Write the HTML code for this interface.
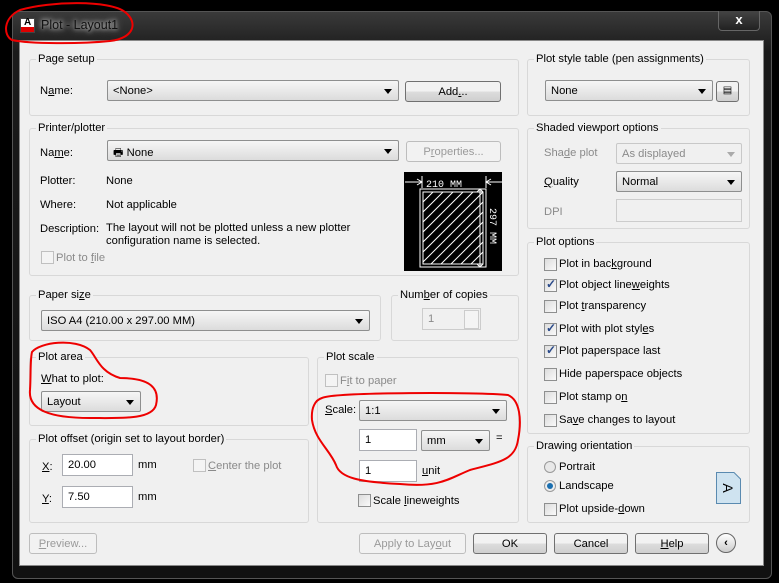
<!DOCTYPE html>
<html><head><meta charset="utf-8"><style>
*{box-sizing:border-box}
body{margin:0;width:779px;height:583px;background:#000;position:relative;overflow:hidden;font-family:"Liberation Sans",sans-serif;font-size:11.2px;color:#000}
.a{position:absolute;white-space:nowrap}
.frame{position:absolute;left:12px;top:11px;width:760px;height:568px;background:linear-gradient(#3a3a3a,#1a1a1a 40px,#111);border:1px solid #555;border-radius:6px}
.client{position:absolute;left:19px;top:40px;width:745px;height:526px;background:#f0f0f0;border:1px solid #888}
.g{position:absolute;border:1px solid #d8d8d8;border-radius:3px}
.gl{position:absolute;background:#f0f0f0;padding:0 2px;left:6px;top:-7px;white-space:nowrap}
.cb{position:absolute;border:1px solid #8e8f8f;border-radius:2px;background:linear-gradient(#f6f6f6,#dcdcdc);height:21px;padding:4px 5px 0;white-space:nowrap}
.cb:after{content:"";position:absolute;right:6px;top:8px;border:4px solid transparent;border-top:5px solid #000;border-bottom:0}
.cb.dis{color:#8a8a8a;border-color:#c8c8c8;background:#f0f0f0}
.cb.dis:after{border-top-color:#aaa}
.btn{position:absolute;border:1px solid #707070;border-radius:3px;background:linear-gradient(#f2f2f2 50%,#dddddd 50%,#cfcfcf);text-align:center;height:21px;padding-top:4px}
.btn.dis{color:#9a9a9a;border-color:#bdbdbd;background:#f2f2f2}
.in{position:absolute;background:#fff;border:1px solid #abadb3;height:22px;padding:4px 5px}
.ck{position:absolute;width:13px;height:13px;border:1px solid #8e8f8f;background:linear-gradient(135deg,#dcdcdc,#fafafa)}
.ck.on:after{content:"✓";position:absolute;left:1px;top:-3px;font-size:12px;color:#2a4a8a;font-weight:bold}
.ck.dis{border-color:#c0c0c0;background:#f4f4f4}
.gr{color:#8a8a8a}
u{text-decoration:underline}
</style></head><body>
<div class="frame"></div>
<div class="a" style="left:20px;top:18px;width:15px;height:15px;background:#fff;border:1px solid #444"><div style="position:absolute;left:0;right:0;bottom:0;height:5px;background:#d00"></div><div style="position:absolute;left:3px;top:-2px;font-size:10px;font-weight:bold">A</div></div>
<div class="a" style="left:41px;top:18px;font-size:12.5px;color:#111;text-shadow:0 0 4px #ddd,0 0 8px #bbb">Plot - Layout1</div>
<div class="a" style="left:718px;top:11px;width:42px;height:20px;border:1px solid #666;border-top:0;border-radius:0 0 4px 4px;background:linear-gradient(#444,#222);color:#fff;font-weight:bold;text-align:center;font-size:13px;line-height:18px">x</div>
<div class="client"></div>

<div class="g" style="left:29px;top:59px;width:490px;height:57px"><span class="gl">Page setup</span></div>
<div class="a" style="left:40px;top:85px">N<u>a</u>me:</div>
<div class="cb" style="left:107px;top:80px;width:292px">&lt;None&gt;</div>
<div class="btn" style="left:405px;top:81px;width:96px">Add<u>.</u>..</div>

<div class="g" style="left:29px;top:128px;width:490px;height:148px"><span class="gl">Printer/plotter</span></div>
<div class="a" style="left:40px;top:147px">Na<u>m</u>e:</div>
<div class="cb" style="left:107px;top:140px;width:292px">🖶 None</div>
<div class="btn dis" style="left:406px;top:141px;width:95px">P<u>r</u>operties...</div>
<div class="a" style="left:40px;top:175px">Plotter:</div><div class="a" style="left:106px;top:175px">None</div>
<div class="a" style="left:40px;top:199px">Where:</div><div class="a" style="left:106px;top:199px">Not applicable</div>
<div class="a" style="left:40px;top:223px">Description:</div>
<div class="a" style="left:106px;top:222px;line-height:13px">The layout will not be plotted unless a new plotter<br>configuration name is selected.</div>
<div class="ck dis" style="left:41px;top:251px"></div><div class="a gr" style="left:56px;top:252px">Plot to <u>f</u>ile</div>
<svg class="a" style="left:404px;top:172px" width="98" height="99" viewBox="0 0 98 99">
<rect width="98" height="99" fill="#000"/>
<g stroke="#fff" fill="none" stroke-width="1">
<path d="M1 10H18M13 7L18 10L13 13M82 10H98M87 7L82 10L87 13M18 4V16M82 4V16"/>
<rect x="16" y="17" width="66" height="78"/><rect x="19" y="20" width="60" height="72"/>
<path d="M70 17H80M70 95H80M76 17V95M73 20L76 17L79 20M73 92L76 95L79 92"/>
<clipPath id="c"><rect x="19" y="20" width="60" height="72"/></clipPath>
<g clip-path="url(#c)"><path d="M19 30L29 20M19 40L39 20M19 50L49 20M19 60L59 20M19 70L69 20M19 80L79 20M19 90L79 30M27 92L79 40M37 92L79 50M47 92L79 60M57 92L79 70M67 92L79 80"/></g>
</g>
<text x="22" y="15" fill="#fff" font-family="Liberation Mono" font-size="10">210 MM</text>
<text transform="translate(86,36) rotate(90)" fill="#fff" font-family="Liberation Mono" font-size="10">297 MM</text>
</svg>

<div class="g" style="left:29px;top:295px;width:352px;height:46px"><span class="gl">Paper si<u>z</u>e</span></div>
<div class="cb" style="left:41px;top:310px;width:329px">ISO A4 (210.00 x 297.00 MM)</div>
<div class="g" style="left:391px;top:295px;width:128px;height:46px"><span class="gl">Num<u>b</u>er of copies</span></div>
<div class="in gr" style="left:422px;top:308px;width:59px;border-color:#ccc;background:#f0f0f0">1</div>
<div class="a" style="left:464px;top:310px;width:15px;height:19px;border:1px solid #ccc;background:#f4f4f4"></div>

<div class="g" style="left:29px;top:357px;width:280px;height:69px"><span class="gl">Plot area</span></div>
<div class="a" style="left:41px;top:373px"><u>W</u>hat to plot:</div>
<div class="cb" style="left:41px;top:391px;width:100px">Layout</div>

<div class="g" style="left:29px;top:439px;width:280px;height:84px"><span class="gl">Plot offset (origin set to layout border)</span></div>
<div class="a" style="left:42px;top:461px"><u>X</u>:</div>
<div class="in" style="left:62px;top:454px;width:71px">20.00</div>
<div class="a" style="left:138px;top:459px">mm</div>
<div class="ck dis" style="left:193px;top:459px"></div><div class="a gr" style="left:208px;top:460px"><u>C</u>enter the plot</div>
<div class="a" style="left:42px;top:493px"><u>Y</u>:</div>
<div class="in" style="left:62px;top:486px;width:71px">7.50</div>
<div class="a" style="left:138px;top:491px">mm</div>

<div class="g" style="left:317px;top:357px;width:202px;height:166px"><span class="gl">Plot scale</span></div>
<div class="ck dis" style="left:325px;top:374px"></div><div class="a gr" style="left:340px;top:375px">F<u>i</u>t to paper</div>
<div class="a" style="left:325px;top:404px"><u>S</u>cale:</div>
<div class="cb" style="left:359px;top:400px;width:148px">1:1</div>
<div class="in" style="left:359px;top:429px;width:58px">1</div>
<div class="cb" style="left:421px;top:430px;width:69px">mm</div>
<div class="a" style="left:496px;top:432px">=</div>
<div class="in" style="left:359px;top:460px;width:58px">1</div>
<div class="a" style="left:422px;top:465px"><u>u</u>nit</div>
<div class="ck" style="left:358px;top:494px"></div><div class="a" style="left:373px;top:495px">Scale <u>l</u>ineweights</div>

<div class="g" style="left:527px;top:59px;width:223px;height:57px"><span class="gl">Plot style table (pen assi<u>g</u>nments)</span></div>
<div class="cb" style="left:545px;top:80px;width:168px">None</div>
<div class="btn" style="left:716px;top:81px;width:23px;font-size:10px;padding-top:3px">▤</div>

<div class="g" style="left:527px;top:128px;width:223px;height:101px"><span class="gl">Shaded viewport options</span></div>
<div class="a gr" style="left:544px;top:147px">Sha<u>d</u>e plot</div>
<div class="cb dis" style="left:616px;top:143px;width:126px">As displayed</div>
<div class="a" style="left:544px;top:176px"><u>Q</u>uality</div>
<div class="cb" style="left:616px;top:171px;width:126px">Normal</div>
<div class="a gr" style="left:544px;top:206px">DPI</div>
<div class="in" style="left:616px;top:199px;width:126px;height:23px;border-color:#ccc;background:#f0f0f0"></div>

<div class="g" style="left:527px;top:242px;width:223px;height:192px"><span class="gl">Plot options</span></div>
<div class="ck" style="left:544px;top:258px"></div><div class="a" style="left:559px;top:258px">Plot in bac<u>k</u>ground</div>
<div class="ck on" style="left:544px;top:279px"></div><div class="a" style="left:559px;top:279px">Plot object line<u>w</u>eights</div>
<div class="ck" style="left:544px;top:300px"></div><div class="a" style="left:559px;top:300px">Plot <u>t</u>ransparency</div>
<div class="ck on" style="left:544px;top:323px"></div><div class="a" style="left:559px;top:323px">Plot with plot styl<u>e</u>s</div>
<div class="ck on" style="left:544px;top:345px"></div><div class="a" style="left:559px;top:345px">Plot paperspace last</div>
<div class="ck" style="left:544px;top:368px"></div><div class="a" style="left:559px;top:368px">Hide paperspace ob<u>j</u>ects</div>
<div class="ck" style="left:544px;top:391px"></div><div class="a" style="left:559px;top:391px">Plot stamp o<u>n</u></div>
<div class="ck" style="left:544px;top:414px"></div><div class="a" style="left:559px;top:414px">Sa<u>v</u>e changes to layout</div>

<div class="g" style="left:527px;top:446px;width:223px;height:77px"><span class="gl">Drawing orientation</span></div>
<div class="a" style="left:544px;top:461px;width:12px;height:12px;border-radius:50%;border:1px solid #999;background:#e8e8e8"></div><div class="a" style="left:559px;top:461px">Portrait</div>
<div class="a" style="left:544px;top:480px;width:12px;height:12px;border-radius:50%;border:1px solid #999;background:#eee"><div style="position:absolute;left:2px;top:2px;width:6px;height:6px;border-radius:50%;background:#1a6fb0"></div></div><div class="a" style="left:559px;top:480px">Landscape</div>
<div class="ck" style="left:544px;top:503px"></div><div class="a" style="left:559px;top:503px">Plot upside-<u>d</u>own</div>
<svg class="a" style="left:716px;top:472px" width="25" height="32"><path d="M0.5 0.5H18L24.5 7V31.5H0.5Z" fill="#cfe3f0" stroke="#5a8ab0"/><text x="12" y="16" font-size="14" font-family="Liberation Sans" text-anchor="middle" dominant-baseline="central" transform="rotate(90 12 16)">A</text></svg>

<div class="btn dis" style="left:29px;top:533px;width:68px"><u>P</u>review...</div>
<div class="btn dis" style="left:359px;top:533px;width:107px">Apply to Lay<u>o</u>ut</div>
<div class="btn" style="left:473px;top:533px;width:74px">OK</div>
<div class="btn" style="left:554px;top:533px;width:74px">Cancel</div>
<div class="btn" style="left:635px;top:533px;width:74px"><u>H</u>elp</div>
<div class="a" style="left:716px;top:533px;width:20px;height:20px;border-radius:50%;border:1px solid #666;background:linear-gradient(#fff,#ccc);text-align:center;font-weight:bold;line-height:18px">‹</div>

<svg class="a" style="left:0;top:0" width="779" height="583" fill="none" stroke="#e00" stroke-width="2">
<path d="M20 10C50 1 110 0 125 12C138 22 135 38 110 41C80 44 30 44 12 40C3 35 3 18 20 10Z"/>
<path d="M32 352C40 342 75 338 90 350C97 358 100 372 120 378C150 378 160 388 156 405C152 420 120 418 90 418C50 418 28 410 30 390C31 375 30 360 32 352Z"/>
<path d="M322 398C335 392 480 392 508 395C520 400 522 420 518 440C515 460 500 462 470 470C450 478 440 488 400 484C360 482 340 478 336 465C330 450 315 440 312 420C311 408 315 400 322 398Z"/>
</svg>
</body></html>
